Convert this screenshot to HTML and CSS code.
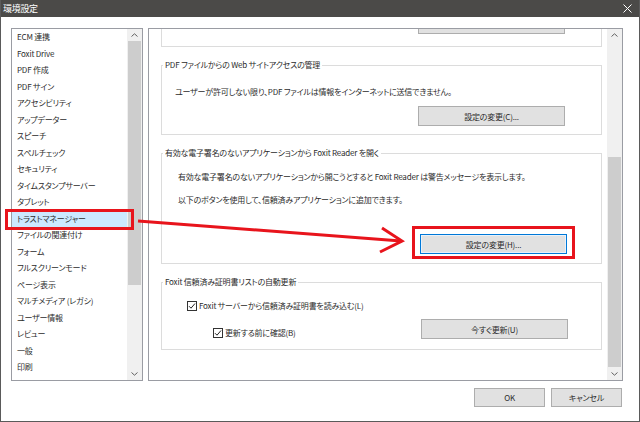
FILE: index.html
```html
<!DOCTYPE html>
<html lang="ja">
<head>
    <meta charset="UTF-8">
    <title>環境設定</title>
    <link rel="stylesheet" href="styles.css">
</head>
<body>
    <div class="window">
        <div class="titlebar">
            <span class="title">環境設定</span>
            <svg class="close" width="9" height="9" viewBox="0 0 9 9"><path d="M0.5 0.5L8.5 8.5M8.5 0.5L0.5 8.5" stroke="#fff" stroke-width="1" fill="none"/></svg>
        </div>

        <div class="dialog-body">
            <!-- category list -->
            <div class="list">
                <ul class="items">
                    <li>ECM 連携</li>
                    <li>Foxit Drive</li>
                    <li>PDF 作成</li>
                    <li>PDF サイン</li>
                    <li>アクセシビリティ</li>
                    <li>アップデーター</li>
                    <li>スピーチ</li>
                    <li>スペルチェック</li>
                    <li>セキュリティ</li>
                    <li>タイムスタンプサーバー</li>
                    <li>タブレット</li>
                    <li class="selected">トラストマネージャー</li>
                    <li>ファイルの関連付け</li>
                    <li>フォーム</li>
                    <li>フルスクリーンモード</li>
                    <li>ページ表示</li>
                    <li>マルチメディア (レガシ)</li>
                    <li>ユーザー情報</li>
                    <li>レビュー</li>
                    <li>一般</li>
                    <li>印刷</li>
                </ul>
                <div class="scrollbar">
                    <div class="sb-arrow"><svg width="7" height="4" viewBox="0 0 7 4"><path d="M0.5 3.5L3.5 0.8L6.5 3.5" stroke="#606060" fill="none"/></svg></div>
                    <div class="sb-track"><div class="sb-thumb list-thumb"></div></div>
                    <div class="sb-arrow"><svg width="7" height="4" viewBox="0 0 7 4"><path d="M0.5 0.5L3.5 3.2L6.5 0.5" stroke="#606060" fill="none"/></svg></div>
                </div>
            </div>

            <!-- settings page -->
            <div class="panel">
                <div class="page">
                    <div class="group-cut">
                        <div class="btn-cut"></div>
                    </div>

                    <fieldset class="group">
                        <legend>PDF ファイルからの Web サイトアクセスの管理</legend>
                        <div class="group-inner g1">
                            <p class="text">ユーザーが許可しない限り、PDF ファイルは情報をインターネットに送信できません。</p>
                            <button class="btn wide g1-btn">設定の変更(C)...</button>
                        </div>
                    </fieldset>

                    <fieldset class="group">
                        <legend>有効な電子署名のないアプリケーションから Foxit Reader を開く</legend>
                        <div class="group-inner g2">
                            <p class="text">有効な電子署名のないアプリケーションから開こうとすると Foxit Reader は警告メッセージを表示します。</p>
                            <p class="text second">以下のボタンを使用して、信頼済みアプリケーションに追加できます。</p>
                            <div class="callout">
                                <button class="btn wide focused">設定の変更(H)...</button>
                            </div>
                        </div>
                    </fieldset>

                    <fieldset class="group">
                        <legend>Foxit 信頼済み証明書リストの自動更新</legend>
                        <div class="group-inner g3">
                            <label class="check cb1"><span class="box"><svg width="8" height="8" viewBox="0 0 8 8"><path d="M1 4.2L3 6.2L7 1.5" stroke="#222" stroke-width="1" fill="none"/></svg></span>Foxit サーバーから信頼済み証明書を読み込む(L)</label>
                            <div class="row">
                                <label class="check cb2"><span class="box"><svg width="8" height="8" viewBox="0 0 8 8"><path d="M1 4.2L3 6.2L7 1.5" stroke="#222" stroke-width="1" fill="none"/></svg></span>更新する前に確認(B)</label>
                                <button class="btn wide">今すぐ更新(U)</button>
                            </div>
                        </div>
                    </fieldset>
                </div>
                <div class="scrollbar">
                    <div class="sb-arrow"><svg width="7" height="4" viewBox="0 0 7 4"><path d="M0.5 3.5L3.5 0.8L6.5 3.5" stroke="#606060" fill="none"/></svg></div>
                    <div class="sb-track"><div class="sb-thumb page-thumb"></div></div>
                    <div class="sb-arrow"><svg width="7" height="4" viewBox="0 0 7 4"><path d="M0.5 0.5L3.5 3.2L6.5 0.5" stroke="#606060" fill="none"/></svg></div>
                </div>
            </div>
        </div>

        <div class="footer">
            <button class="btn">OK</button>
            <button class="btn">キャンセル</button>
        </div>

        <!-- annotation arrow -->
        <svg class="arrow" width="640" height="422" viewBox="0 0 640 422">
            <path d="M138 221L401 241" stroke="#e8141c" stroke-width="3" fill="none"/>
            <path d="M382 228L402 241L380 252" stroke="#e8141c" stroke-width="3" fill="none" stroke-linejoin="miter"/>
        </svg>
    </div>
</body>
</html>
```

FILE: styles.css
```css
* {
    box-sizing: border-box;
}

body {
    margin: 0;
    font-family: "Noto Sans CJK JP", "Noto Sans", sans-serif;
    font-size: 8px;
    letter-spacing: -0.2px;
    font-feature-settings: "palt" 1;
    color: #2b2b2b;
    background: #fff;
}

.window {
    position: relative;
    width: 640px;
    height: 422px;
    border: 1px solid #5a5a5a;
    border-top: none;
    background: #fff;
    overflow: hidden;
}

.titlebar {
    height: 17px;
    margin: 0 -1px;
    background: #4b4a48;
    color: #fff;
    display: flex;
    align-items: center;
    justify-content: space-between;
    padding: 0 8px 0 3px;
}

.title {
    font-size: 9px;
    letter-spacing: -0.3px;
    line-height: 17px;
}

.dialog-body {
    display: flex;
    gap: 5px;
    padding: 11px 0 0 10px;
}

/* left list */
.list {
    width: 132px;
    height: 353px;
    border: 1px solid #9a9ca3;
    display: flex;
}

.items {
    list-style: none;
    margin: 0;
    padding: 0;
    flex: 1;
}

.items li {
    height: 16.5px;
    line-height: 16.5px;
    padding-left: 5px;
    white-space: nowrap;
    position: relative;
}

.items li.selected {
    background: #cce8ff;
}

.items li.selected::after {
    content: "";
    position: absolute;
    left: -7px;
    right: -7px;
    top: -2px;
    bottom: -3px;
    border: 3px solid #e8141c;
}

.scrollbar {
    width: 15px;
    background: #f0f0f0;
    display: flex;
    flex-direction: column;
}

.sb-arrow {
    height: 12px;
    display: flex;
    align-items: center;
    justify-content: center;
}

.sb-track {
    flex: 1;
    padding: 0 1px;
}

.sb-thumb {
    background: #cdcdcd;
}

.list-thumb {
    height: 244px;
}

.page-thumb {
    margin-top: 116px;
    height: 210px;
}

/* right page */
.panel {
    width: 475px;
    height: 353px;
    border: 1px solid #9a9ca3;
    display: flex;
}

.page {
    flex: 1;
    padding: 0 5px 0 12px;
    overflow: hidden;
}

.group-cut {
    height: 18px;
    border: 1px solid #dcdcdc;
    border-top: none;
}

.btn-cut {
    margin-left: 256px;
    width: 147px;
    height: 5px;
    background: #e1e1e1;
    border: 1px solid #adadad;
    border-top: none;
}

.group {
    margin: 11px 0 0;
    padding: 0;
    min-width: 0;
    border: 1px solid #dcdcdc;
}

.group legend {
    margin-left: 1px;
    padding: 0 2px;
    line-height: 14px;
}

.group-inner {
    padding-left: 12px;
}

.text {
    margin: 0;
    line-height: 16px;
    white-space: nowrap;
}

.g1 {
    padding: 12px 0 8px 13px;
}

.g1-btn {
    margin: 6px 0 0 243px;
}

.g2 {
    padding: 9px 0 4px 16px;
}

.g2 .second {
    margin-top: 7px;
}

.callout {
    display: inline-block;
    margin: 18px 0 0 234px;
    border: 3px solid #e8141c;
    padding: 5px 5px 2px 5px;
}

.g3 {
    padding: 9px 0 10px 0;
}

.btn {
    font-family: inherit;
    font-size: 8px;
    letter-spacing: -0.2px;
    font-feature-settings: "palt" 1;
    color: #2b2b2b;
    background: #e1e1e1;
    border: 1px solid #adadad;
    height: 19px;
    width: 71px;
    padding: 0;
}

.btn.wide {
    width: 147px;
    height: 20px;
    display: block;
}

.btn.focused {
    border-color: #0078d7;
    box-shadow: inset 0 0 0 1px #e8f1fb;
}

.check {
    display: flex;
    align-items: center;
    line-height: 16px;
    white-space: nowrap;
}

.box {
    width: 10px;
    height: 10px;
    border: 1px solid #333;
    margin-right: 2px;
    display: flex;
    align-items: center;
    justify-content: center;
    background: #fff;
}

.cb1 {
    margin-left: 25px;
}

.row {
    display: flex;
    align-items: flex-end;
    margin-top: 5px;
}

.cb2 {
    margin: 0 0 -2px 51px;
    width: 208px;
}

.footer {
    display: flex;
    justify-content: flex-end;
    gap: 6px;
    padding: 7px 17px 0 0;
}

.arrow {
    position: absolute;
    left: -1px;
    top: 0;
    pointer-events: none;
}
```
